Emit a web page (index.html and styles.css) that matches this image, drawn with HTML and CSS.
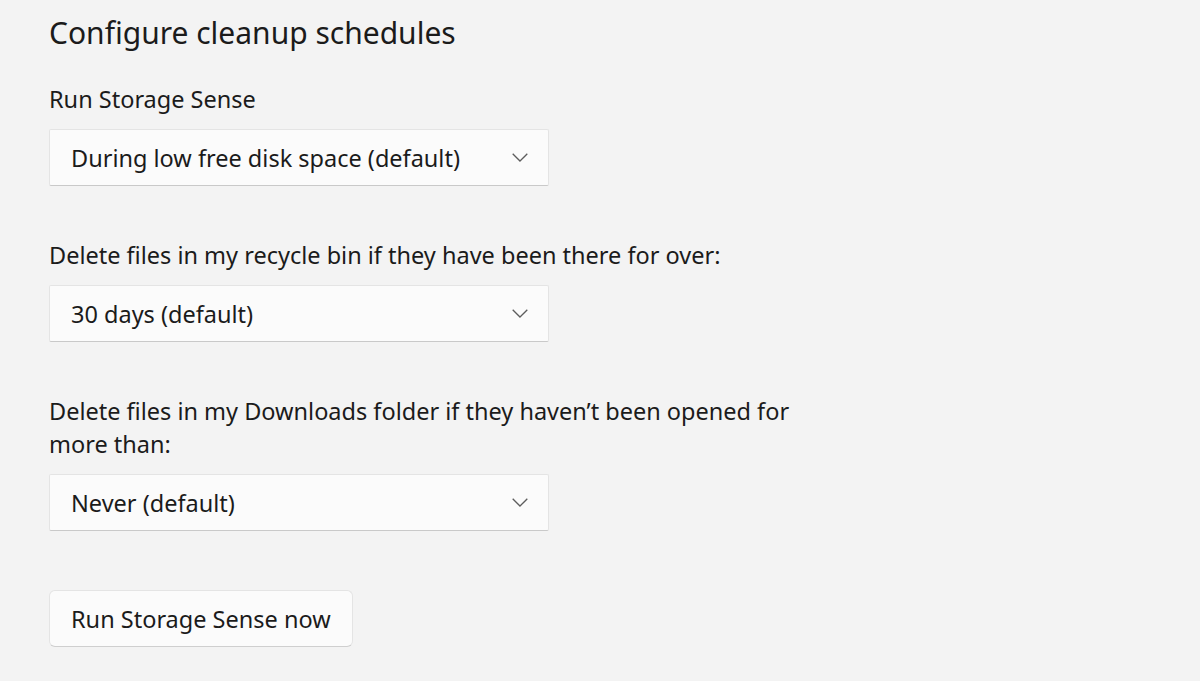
FILE: index.html
```html
<!DOCTYPE html>
<html lang="en">
<head>
<meta charset="utf-8">
<title>Configure cleanup schedules</title>
<link rel="stylesheet" href="styles.css">
</head>
<body>
<main class="page">
  <h1 class="title">Configure cleanup schedules</h1>

  <section class="field">
    <div class="label">Run Storage Sense</div>
    <div class="combo">
      <span class="combo-text">During low free disk space (default)</span>
      <svg class="chev" viewBox="0 0 16 9" width="16" height="9"><path d="M0.7 0.7 L8 8 L15.3 0.7" fill="none" stroke="#5d5d5d" stroke-width="1.3"/></svg>
    </div>
  </section>

  <section class="field">
    <div class="label">Delete files in my recycle bin if they have been there for over:</div>
    <div class="combo">
      <span class="combo-text">30 days (default)</span>
      <svg class="chev" viewBox="0 0 16 9" width="16" height="9"><path d="M0.7 0.7 L8 8 L15.3 0.7" fill="none" stroke="#5d5d5d" stroke-width="1.3"/></svg>
    </div>
  </section>

  <section class="field">
    <div class="label">Delete files in my Downloads folder if they haven’t been opened for<br>more than:</div>
    <div class="combo">
      <span class="combo-text">Never (default)</span>
      <svg class="chev" viewBox="0 0 16 9" width="16" height="9"><path d="M0.7 0.7 L8 8 L15.3 0.7" fill="none" stroke="#5d5d5d" stroke-width="1.3"/></svg>
    </div>
  </section>

  <button class="btn" type="button">Run Storage Sense now</button>
</main>
</body>
</html>
```

FILE: styles.css
```css
html, body {
  margin: 0;
  padding: 0;
  background: #f3f3f3;
}
body {
  font-family: "Noto Sans", "Open Sans", sans-serif;
  color: #1b1b1b;
}
.page {
  padding: 12px 0 0 49px;
  display: flex;
  flex-direction: column;
  align-items: flex-start;
}
.title {
  margin: 0;
  font-size: 30px;
  font-weight: 400;
  line-height: 42px;
}
.field {
  display: flex;
  flex-direction: column;
  align-items: flex-start;
  margin-top: 29px;
}
.field + .field {
  margin-top: 53px;
}
.label {
  font-size: 23.5px;
  line-height: 33px;
  margin-bottom: 13px;
}
.combo {
  box-sizing: border-box;
  width: 500px;
  height: 57px;
  background: #fbfbfb;
  border: 1px solid #e4e4e4;
  border-bottom-color: #c9c9c9;
  border-radius: 2px;
  display: flex;
  align-items: center;
  justify-content: space-between;
  padding: 0 20px 0 21px;
}
.combo-text {
  font-size: 23.5px;
}
.chev {
  display: block;
}
.btn {
  margin-top: 59px;
  box-sizing: border-box;
  height: 57px;
  padding: 0 21px;
  background: #fbfbfb;
  border: 1px solid #e4e4e4;
  border-bottom-color: #cfcfcf;
  border-radius: 6px;
  font-family: inherit;
  font-size: 23.5px;
  color: #1b1b1b;
}
```
